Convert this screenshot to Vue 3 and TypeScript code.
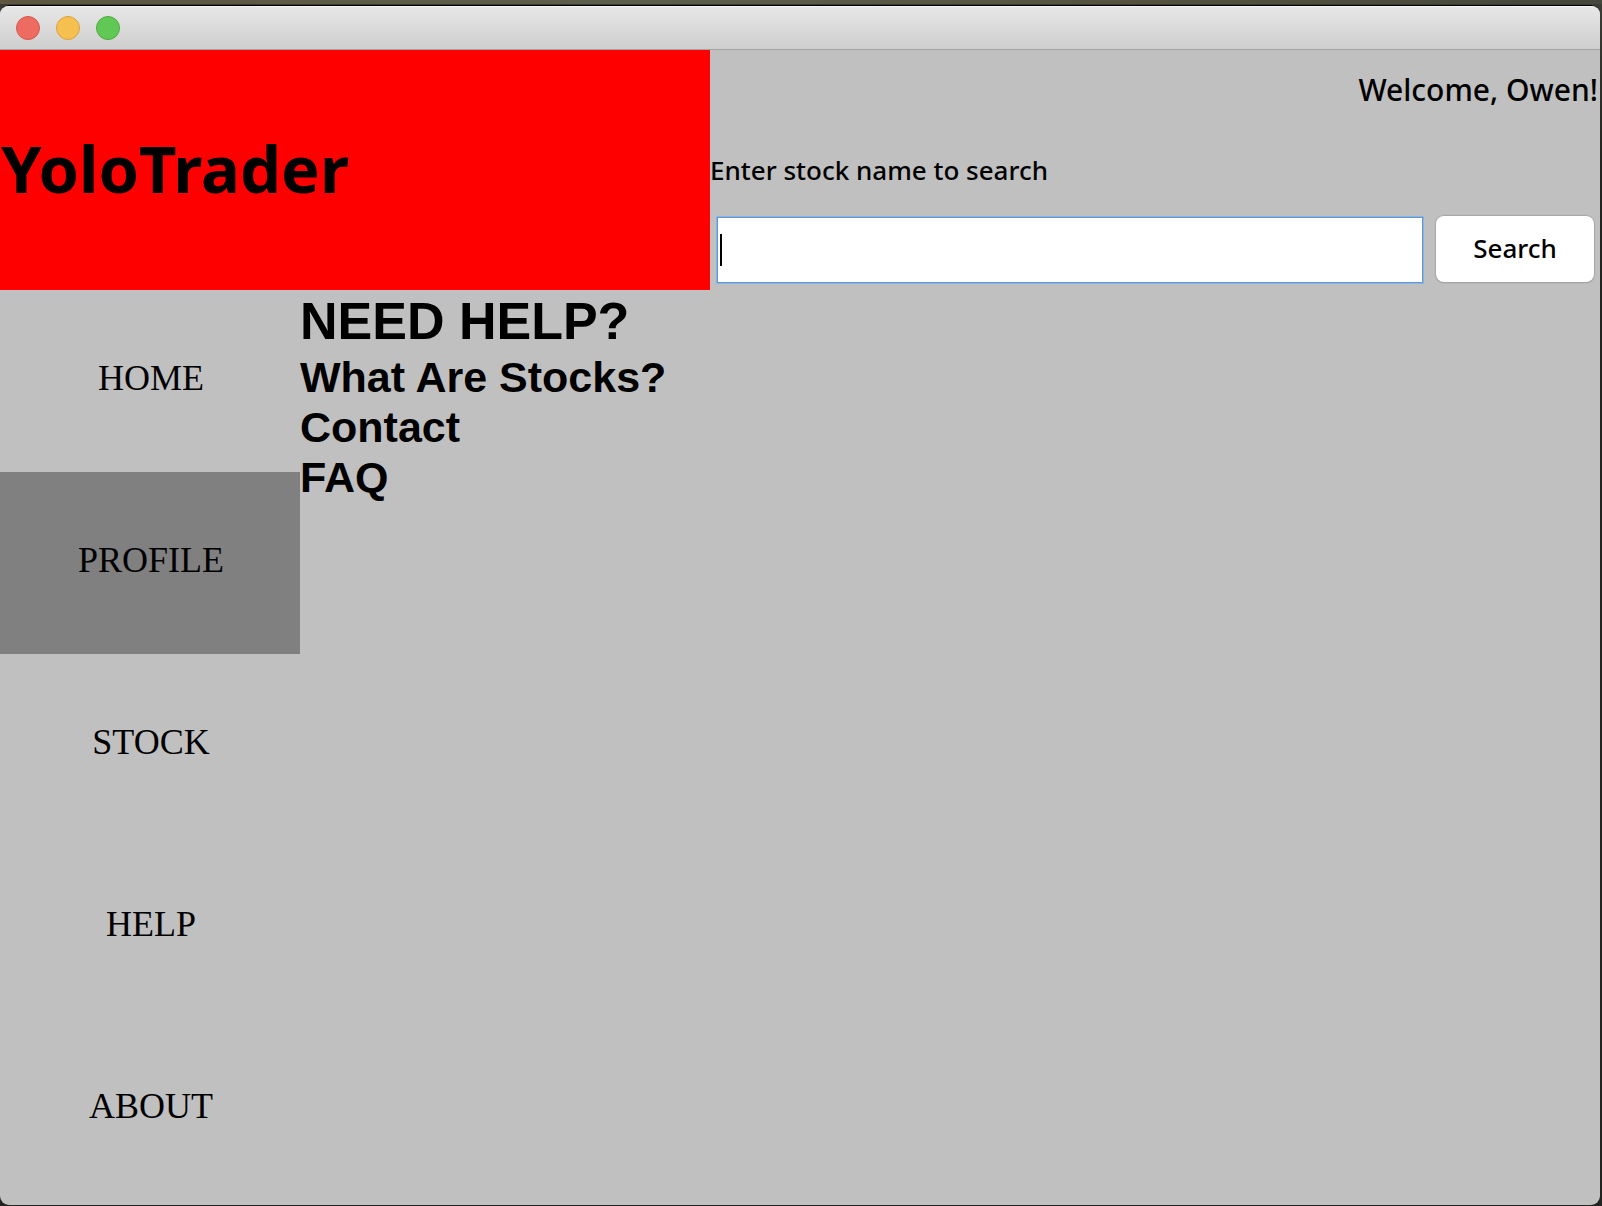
<script setup lang="ts">
import { ref } from 'vue'

interface NavItem {
  id: string
  label: string
}

const navItems: NavItem[] = [
  { id: 'home', label: 'HOME' },
  { id: 'profile', label: 'PROFILE' },
  { id: 'stock', label: 'STOCK' },
  { id: 'help', label: 'HELP' },
  { id: 'about', label: 'ABOUT' },
]

const helpTopics: string[] = ['What Are Stocks?', 'Contact', 'FAQ']

const highlighted = ref<string>('profile')
const query = ref<string>('')
</script>

<template>
  <div class="desktop">
    <div class="window">
      <div class="titlebar">
        <button class="light close" type="button" aria-label="Close"></button>
        <button class="light minimize" type="button" aria-label="Minimize"></button>
        <button class="light maximize" type="button" aria-label="Maximize"></button>
      </div>

      <header class="header">
        <div class="brand">
          <h1 class="brand-name">YoloTrader</h1>
        </div>
        <div class="account">
          <p class="welcome">Welcome, Owen!</p>
          <label class="search-label" for="stock-search">Enter stock name to search</label>
          <form class="search" @submit.prevent>
            <div class="field">
              <input id="stock-search" v-model="query" class="search-input" type="text" autocomplete="off" />
              <span v-if="!query" class="caret"></span>
            </div>
            <button class="search-button" type="submit">Search</button>
          </form>
        </div>
      </header>

      <div class="body">
        <nav class="nav">
          <a
            v-for="item in navItems"
            :key="item.id"
            class="nav-item"
            :class="{ highlighted: item.id === highlighted }"
            :href="'#' + item.id"
            @mouseenter="highlighted = item.id"
          >{{ item.label }}</a>
        </nav>
        <main class="content">
          <h2 class="help-title">NEED HELP?</h2>
          <h3 v-for="topic in helpTopics" :key="topic" class="help-topic">{{ topic }}</h3>
        </main>
      </div>
    </div>
  </div>
</template>

<style>
body {
  margin: 0;
  background: #232321;
}
</style>

<style scoped>
.desktop {
  box-sizing: border-box;
  display: flex;
  min-height: 100vh;
  padding: 5px 2px 1px 0;
  background:
    linear-gradient(90deg, #5d573f, #5c5f4c 40%, #55533f 70%, #44473b) top / 100% 4px no-repeat,
    linear-gradient(#3c3d35, #232321 160px);
}

.window {
  display: flex;
  flex: 1;
  flex-direction: column;
  overflow: hidden;
  border-top: 1px solid #000;
  border-radius: 9px;
  background: #c0c0c0;
  color: #000;
  font-family: "Lucida Grande", "Noto Sans", "Open Sans", sans-serif;
}

.titlebar {
  box-sizing: border-box;
  display: flex;
  align-items: center;
  gap: 16px;
  height: 44px;
  padding-left: 16px;
  border-top: 1px solid #f6f6f6;
  border-bottom: 1px solid #a3a3a3;
  background: linear-gradient(#e7e7e7, #cecece);
}

.light {
  box-sizing: border-box;
  width: 24px;
  height: 24px;
  padding: 0;
  border: 1px solid;
  border-radius: 50%;
}

.close {
  border-color: #d6584e;
  background: #ed6b60;
}

.minimize {
  border-color: #d9a344;
  background: #f5c04f;
}

.maximize {
  border-color: #4eab3f;
  background: #62c855;
}

.header {
  display: grid;
  grid-template-columns: 71fr 89fr;
}

.brand {
  display: flex;
  align-items: center;
  padding-bottom: 4px;
  background: #f00;
}

.brand-name {
  margin: 0;
  padding-left: 1px;
  font-size: 65px;
  line-height: 80px;
  font-weight: 700;
}

.account {
  display: flex;
  flex-direction: column;
}

.welcome {
  margin: 0;
  padding-right: 2px;
  font-size: 30px;
  line-height: 80px;
  font-weight: 500;
  text-align: right;
}

.search-label {
  font-size: 26px;
  line-height: 80px;
  font-weight: 500;
}

.search {
  display: flex;
  align-items: flex-start;
  gap: 12px;
  padding: 6px;
}

.field {
  position: relative;
  flex: 1;
}

.search-input {
  box-sizing: border-box;
  display: block;
  width: 100%;
  height: 68px;
  padding: 0 4px;
  border: 1px solid #8db3df;
  border-radius: 0;
  outline: none;
  background: #fff;
  box-shadow: inset 0 0 0 1px #5f95d2;
  font: inherit;
  font-size: 26px;
}

.search-input:focus + .caret {
  display: none;
}

.caret {
  position: absolute;
  top: 18px;
  left: 4px;
  width: 2px;
  height: 32px;
  background: #000;
  pointer-events: none;
}

.search-button {
  width: 158px;
  height: 66px;
  padding: 0 0 2px;
  border: 0;
  border-radius: 8px;
  background: #fff;
  box-shadow: 0 0 1px 1px #a6a6a6, 0 1px 1px #8e8e8e;
  color: #000;
  font: inherit;
  font-size: 26px;
  font-weight: 500;
}

.body {
  display: flex;
  flex: 1;
}

.nav {
  display: flex;
  flex-direction: column;
  width: 300px;
}

.nav-item {
  box-sizing: border-box;
  height: 182px;
  padding: 0 0 6px 2px;
  color: #000;
  font-family: "Liberation Serif", "Times New Roman", serif;
  font-size: 36px;
  line-height: 176px;
  text-align: center;
  text-decoration: none;
}

.highlighted {
  background: #808080;
}

.content {
  flex: 1;
  font-family: "Liberation Sans", Arial, sans-serif;
}

.help-title {
  margin: 0;
  font-size: 52px;
  line-height: 62px;
}

.help-topic {
  margin: 0;
  font-size: 43px;
  line-height: 50px;
}
</style>
